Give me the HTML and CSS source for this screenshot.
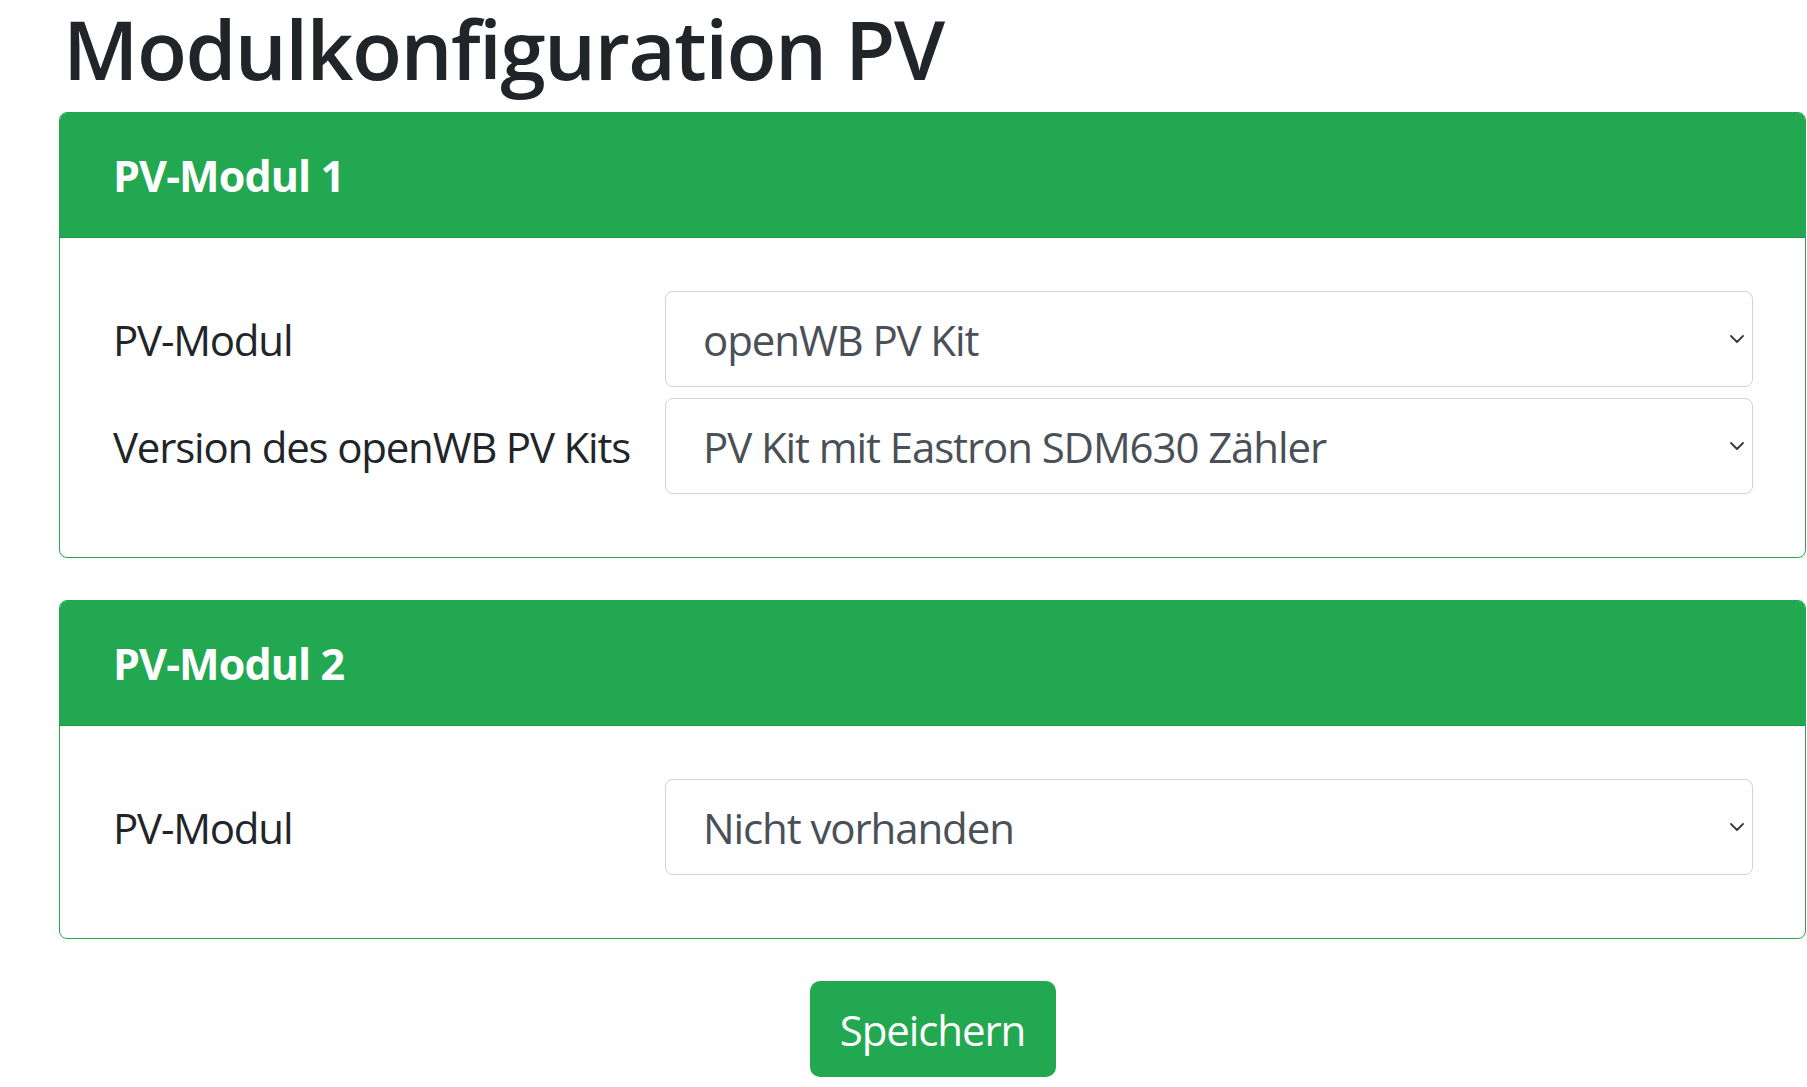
FILE: index.html
```html
<!DOCTYPE html>
<html lang="de">
<head>
<meta charset="utf-8">
<title>Modulkonfiguration PV</title>
<link rel="stylesheet" href="styles.css">
</head>
<body>
<main class="page">
  <h1 class="page-title">Modulkonfiguration PV</h1>

  <section class="card">
    <header class="card-header">PV-Modul 1</header>
    <div class="card-body">
      <div class="form-row">
        <label class="form-label" for="pv1">PV-Modul</label>
        <div class="select-wrap">
          <select id="pv1" class="form-select">
            <option>openWB PV Kit</option>
          </select>
          <svg class="chevron" width="14" height="8" viewBox="0 0 14 8"><polyline points="1,1 7,7 13,1" fill="none" stroke="#343a40" stroke-width="1.8" stroke-linecap="round" stroke-linejoin="round"/></svg>
        </div>
      </div>
      <div class="form-row">
        <label class="form-label" for="pv1v">Version des openWB PV Kits</label>
        <div class="select-wrap">
          <select id="pv1v" class="form-select">
            <option>PV Kit mit Eastron SDM630 Zähler</option>
          </select>
          <svg class="chevron" width="14" height="8" viewBox="0 0 14 8"><polyline points="1,1 7,7 13,1" fill="none" stroke="#343a40" stroke-width="1.8" stroke-linecap="round" stroke-linejoin="round"/></svg>
        </div>
      </div>
    </div>
  </section>

  <section class="card">
    <header class="card-header">PV-Modul 2</header>
    <div class="card-body">
      <div class="form-row">
        <label class="form-label" for="pv2">PV-Modul</label>
        <div class="select-wrap">
          <select id="pv2" class="form-select">
            <option>Nicht vorhanden</option>
          </select>
          <svg class="chevron" width="14" height="8" viewBox="0 0 14 8"><polyline points="1,1 7,7 13,1" fill="none" stroke="#343a40" stroke-width="1.8" stroke-linecap="round" stroke-linejoin="round"/></svg>
        </div>
      </div>
    </div>
  </section>

  <div class="actions">
    <button type="button" class="btn-save">Speichern</button>
  </div>
</main>
</body>
</html>
```

FILE: styles.css
```css
* { box-sizing: border-box; }

html, body {
  margin: 0;
  padding: 0;
  background: #ffffff;
}

body {
  font-family: "Open Sans", "Noto Sans", sans-serif;
  color: #212529;
  overflow: hidden;
}

.page {
  padding: 0 1px 0 59px;
}

.page-title {
  margin: 0 0 10px 0;
  padding: 0 0 6px 4px;
  font-size: 82px;
  line-height: 96px;
  font-weight: 600;
  color: #212529;
  letter-spacing: -1.6px;
}

.card {
  border: 1px solid #23a852;
  border-radius: 8px;
  overflow: hidden;
  margin-bottom: 42px;
  background: #fff;
}

.card-header {
  height: 125px;
  display: flex;
  align-items: center;
  padding: 0 53px;
  background: #23a852;
  border-bottom: 1px solid #1e9448;
  color: #fff;
  font-weight: 700;
  font-size: 43px;
  letter-spacing: -0.9px;
}

.card-body {
  padding: 53px 52px 63px 50px;
  display: flex;
  flex-direction: column;
  gap: 11px;
}

.form-row {
  display: grid;
  grid-template-columns: 555px 1fr;
  align-items: center;
}

.form-label {
  font-size: 42px;
  color: #212529;
  padding-left: 3px;
  letter-spacing: -1.2px;
  white-space: nowrap;
}

.select-wrap {
  position: relative;
}

.form-select {
  -webkit-appearance: none;
  appearance: none;
  display: block;
  width: 100%;
  height: 96px;
  margin: 0;
  padding: 0 60px 0 37px;
  border: 1px solid #ced4da;
  border-radius: 8px;
  background: #fff;
  color: #495057;
  font-family: "Open Sans", "Noto Sans", sans-serif;
  font-size: 42px;
  letter-spacing: -1.1px;
  outline: none;
}

.chevron {
  position: absolute;
  right: 9px;
  top: 44px;
  pointer-events: none;
}

.actions {
  display: flex;
  justify-content: center;
}

.btn-save {
  width: 246px;
  height: 96px;
  border: none;
  border-radius: 10px;
  background: #23a852;
  color: #fff;
  font-family: "Open Sans", "Noto Sans", sans-serif;
  font-size: 42px;
  letter-spacing: -1.1px;
  padding: 0;
  cursor: pointer;
}
```
